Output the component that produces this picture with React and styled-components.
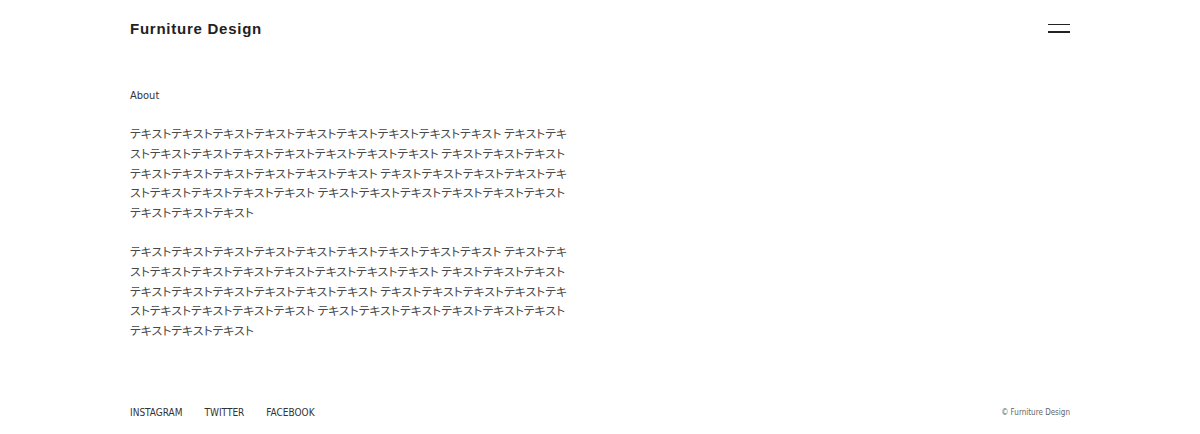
import React from 'react'
import { styled, createGlobalStyle } from "styled-components";

const chunk = "テキスト".repeat(9);
const body = Array(5).fill(chunk).join(" ");

const App = () => {
  return (
    <>
      <GlobalStyle />
      <PageLayout>
        <Header>
          <Logo>Furniture Design</Logo>
          <MenuButton aria-label="menu">
            <MenuLine />
            <MenuLine />
          </MenuButton>
        </Header>
        <Main>
          <SectionTitle>About</SectionTitle>
          <BodyText>{body}</BodyText>
          <BodyText>{body}</BodyText>
        </Main>
        <Footer>
          <SnsList>
            <SnsLink>INSTAGRAM</SnsLink>
            <SnsLink>TWITTER</SnsLink>
            <SnsLink>FACEBOOK</SnsLink>
          </SnsList>
          <Copyright>© Furniture Design</Copyright>
        </Footer>
      </PageLayout>
    </>
  )
}

export default App

const GlobalStyle = createGlobalStyle`
  body {
    margin: 0;
    background-color: #fff;
    color: #333;
    font-family: "DejaVu Sans Condensed", "DejaVu Sans", "Noto Sans CJK JP", sans-serif;
  }
`;

const PageLayout = styled.div`
  width: 940px;
  min-height: 434px;
  margin: 0 auto;
  display: flex;
  flex-direction: column;
`;

const Header = styled.header`
  height: 56px;
  display: flex;
  justify-content: space-between;
  align-items: center;
`;

const Logo = styled.h1`
  margin: 0;
  font-family: "Liberation Sans", Arial, sans-serif;
  font-size: 15px;
  font-weight: bold;
  letter-spacing: 0.05em;
  color: #222;
`;

const MenuButton = styled.div`
  width: 22px;
  height: 9px;
  display: flex;
  flex-direction: column;
  justify-content: space-between;
  cursor: pointer;
`;

const MenuLine = styled.span`
  display: block;
  height: 1.5px;
  background-color: #222;
`;

const Main = styled.main`
  margin-top: 32px;
  width: 441px;
`;

const SectionTitle = styled.h2`
  margin: 0 0 19px;
  font-size: 11px;
  font-weight: normal;
  line-height: 16px;
  color: #333;
`;

const BodyText = styled.p`
  margin: 0 0 19px;
  font-family: "Noto Sans CJK JP", sans-serif;
  font-feature-settings: "palt";
  font-size: 11.85px;
  line-height: 19.8px;
  color: #484848;
  word-break: break-all;
`;

const Footer = styled.footer`
  margin-top: auto;
  height: 44px;
  display: flex;
  justify-content: space-between;
  align-items: center;
`;

const SnsList = styled.div`
  display: flex;
  gap: 22px;
`;

const SnsLink = styled.a`
  font-size: 10px;
  color: #333;
  cursor: pointer;
`;

const Copyright = styled.small`
  font-size: 8px;
  color: #666;
`;
